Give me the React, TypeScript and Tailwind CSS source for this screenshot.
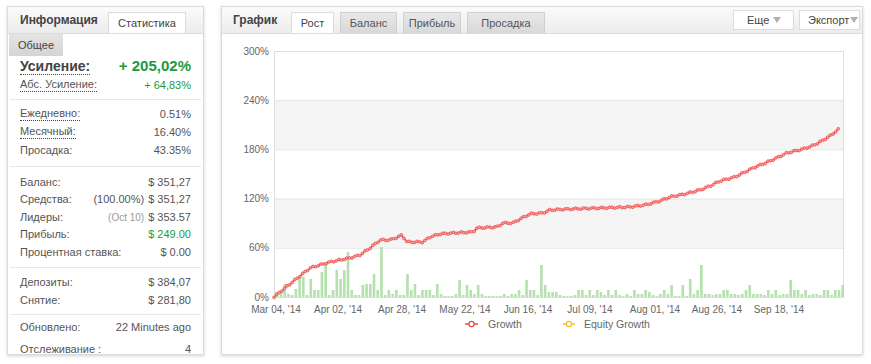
import React from 'react';

const font = { fontFamily: '"Liberation Sans", Arial, sans-serif' };

// bar heights in px, one per trading day
const bars = [
  5, 5, 13, 3, 2, 8, 22, 20, 2, 18, 7, 7, 25, 35, 2, 7, 27, 18, 27, 45,
  7, 2, 2, 12, 13, 13, 23, 7, 50, 2, 7, 3, 7, 2, 2, 23, 7, 13, 2, 7,
  7, 7, 2, 13, 3, 1, 1, 1, 3, 17, 2, 12, 7, 3, 12, 3, 1, 1, 1, 1,
  1, 3, 1, 3, 3, 7, 2, 17, 7, 7, 2, 32, 12, 5, 5, 5, 2, 1, 1, 1,
  2, 7, 7, 2, 7, 2, 7, 5, 2, 7, 2, 7, 2, 1, 3, 1, 7, 3, 3, 7,
  5, 2, 1, 3, 7, 3, 12, 1, 1, 12, 1, 18, 3, 7, 32, 3, 3, 2, 3, 3,
  7, 7, 3, 3, 2, 3, 7, 12, 3, 3, 3, 2, 7, 3, 7, 2, 3, 3, 17, 7,
  7, 3, 7, 2, 3, 3, 2, 7, 7, 2, 7, 7, 12,
];

// growth curve key points (page coords)
const key: [number, number][] = [
  [274, 297], [280, 292], [290, 284], [300, 276], [310, 268], [320, 265], [330, 262],
  [340, 260], [350, 258], [360, 255], [370, 248], [380, 240], [390, 240], [398, 237],
  [402, 235], [407, 242], [423, 242], [430, 237], [440, 234], [453, 233], [473, 232],
  [477, 228], [497, 227], [503, 223], [513, 223], [520, 219], [530, 214], [543, 213],
  [550, 210], [570, 209], [600, 208], [630, 207], [645, 205], [660, 201], [670, 197],
  [685, 194], [700, 190], [710, 186], [720, 181], [735, 177], [753, 168], [770, 161],
  [787, 153], [803, 149], [812, 146], [820, 142], [830, 136], [840, 128],
];

const OX = 222;
const OY = 34;

function growthPoints() {
  const pts: [number, number][] = [];
  let k = 0;
  for (let x = 274; x <= 840; x += 2.6) {
    while (k < key.length - 2 && key[k + 1][0] < x) k++;
    const [x0, y0] = key[k];
    const [x1, y1] = key[k + 1];
    const t = Math.min(1, Math.max(0, (x - x0) / (x1 - x0)));
    const y = y0 + (y1 - y0) * t + Math.sin(x * 1.7) * 0.7;
    pts.push([x - OX, y - OY]);
  }
  return pts;
}

const xLabels: [number, string][] = [
  [276, "Mar 04, '14"],
  [338, "Apr 02, '14"],
  [402, "Apr 28, '14"],
  [465, "May 22, '14"],
  [528, "Jun 16, '14"],
  [590, "Jul 09, '14"],
  [655, "Aug 01, '14"],
  [717, "Aug 26, '14"],
  [779, "Sep 18, '14"],
];

function Chart() {
  const left = 52;
  const right = 621;
  const top = 17;
  const bottom = 263;
  const step = (bottom - top) / 5;
  const pts = growthPoints();
  const ticks = ['300%', '240%', '180%', '120%', '60%', '0%'];

  return (
    <svg width={640} height={320} className="block" style={font}>
      <rect x={left} y={top + step} width={right - left} height={step} fill="#f5f5f5" />
      <rect x={left} y={top + step * 3} width={right - left} height={step} fill="#f5f5f5" />
      {ticks.map((t, i) => (
        <g key={t}>
          <line x1={left} x2={right} y1={top + step * i + 0.5} y2={top + step * i + 0.5} stroke="#e6e6e6" />
          <text x={47} y={top + step * i + 3.5} fontSize={10} fill="#666" textAnchor="end">
            {t}
          </text>
        </g>
      ))}
      <rect x={left + 0.5} y={top + 0.5} width={right - left} height={bottom - top} fill="none" stroke="#dedede" />
      {bars.map((h, i) => (
        <rect key={i} x={54 + i * 3.72} y={bottom - h} width={2.6} height={h} fill="#b4e1ad" />
      ))}
      <polyline
        points={pts.map((p) => p.join(',')).join(' ')}
        fill="none"
        stroke="#ee4040"
        strokeWidth={1.5}
      />
      {pts.map((p, i) => (
        <circle key={i} cx={p[0]} cy={p[1]} r={1.4} fill="#f7a3a3" stroke="#ef4f4f" strokeWidth={0.8} />
      ))}
      {xLabels.map(([x, l]) => (
        <text key={l} x={x - OX} y={278.5} fontSize={10} fill="#666" textAnchor="middle">
          {l}
        </text>
      ))}
      {/* legend */}
      <line x1={243} x2={256} y1={290} y2={290} stroke="#e84848" strokeWidth={1.5} />
      <circle cx={249.5} cy={290} r={2.6} fill="#fff" stroke="#e84848" strokeWidth={1.2} />
      <text x={266} y={293.5} fontSize={10.5} fill="#666">Growth</text>
      <line x1={341} x2={353} y1={290} y2={290} stroke="#f3c019" strokeWidth={1.5} />
      <circle cx={347} cy={290} r={2.6} fill="#fff" stroke="#f3c019" strokeWidth={1.2} />
      <text x={362} y={293.5} fontSize={10.5} fill="#666">Equity Growth</text>
    </svg>
  );
}

function Row({ label, value, dotted, green, extra }: {
  label: string;
  value: string;
  dotted?: boolean;
  green?: boolean;
  extra?: React.ReactNode;
}) {
  return (
    <div className="flex h-[17.5px] items-center justify-between px-3 text-[11px] text-[#555]">
      <span className={dotted ? 'border-b border-dotted border-[#444] leading-[13px]' : ''}>{label}</span>
      <span className={green ? 'text-[#1d9a3c]' : ''}>
        {extra}
        {value}
      </span>
    </div>
  );
}

function Divider({ className }: { className: string }) {
  return <div className={`mx-[2px] h-px bg-[#e6e6e6] ${className}`} />;
}

export default function App() {
  return (
    <div className="flex h-[364px] w-[871px] gap-[17px] bg-white pl-[7px] pt-[6px]" style={font}>
      {/* Info panel */}
      <div className="h-[349px] w-[197px] overflow-hidden border border-[#dcdcdc] bg-white shadow-[0_1px_3px_rgba(0,0,0,0.18)]">
        <div className="flex h-[27px] items-end border-b border-[#dcdcdc] bg-gradient-to-b from-[#fbfbfb] to-[#ececec]">
          <div className="w-[100px] self-center pl-3 text-[12px] font-bold text-[#444]">Информация</div>
          <div className="flex h-[21px] w-[78px] items-center justify-center border border-b-0 border-[#dcdcdc] bg-white text-[11px] text-[#444]">
            Статистика
          </div>
        </div>
        <div className="ml-px flex h-[22px] w-[54px] items-center justify-center bg-gradient-to-b from-[#e4e4e4] to-[#d4d4d4] text-[11px] text-[#444]">
          Общее
        </div>
        <div className="flex h-[20px] items-center justify-between px-3">
          <span className="border-b border-dotted border-[#444] text-[14px] font-bold leading-[16px] text-[#444]">Усиление:</span>
          <span className="text-[15px] font-bold text-[#1d9a3c]">+ 205,02%</span>
        </div>
        <div className="flex h-[18px] items-center justify-between px-3 text-[11px] text-[#555]">
          <span className="border-b border-dotted border-[#444] leading-[13px]">Абс. Усиление:</span>
          <span className="text-[#1d9a3c]">+ 64,83%</span>
        </div>
        <Divider className="mt-[5px]" />
        <div className="pt-[5px]">
          <div className="h-[18px]"><Row label="Ежедневно:" value="0.51%" dotted /></div>
          <div className="h-[18px]"><Row label="Месячный:" value="16.40%" dotted /></div>
          <div className="h-[18px]"><Row label="Просадка:" value="43.35%" /></div>
        </div>
        <Divider className="mt-[7px]" />
        <div className="pt-[6px]">
          <Row label="Баланс:" value="$ 351,27" />
          <Row label="Средства:" value="$ 351,27" extra={<span className="mr-1">(100.00%)</span>} />
          <Row label="Лидеры:" value="$ 353.57" extra={<span className="mr-1 text-[10px] text-[#999]">(Oct 10)</span>} />
          <Row label="Прибыль:" value="$ 249.00" green />
          <Row label="Процентная ставка:" value="$ 0.00" />
        </div>
        <Divider className="mt-[6px]" />
        <div className="pt-[6px]">
          <Row label="Депозиты:" value="$ 384,07" />
          <Row label="Снятие:" value="$ 281,80" />
        </div>
        <Divider className="mt-[5px]" />
        <div className="pt-[4px]">
          <Row label="Обновлено:" value="22 Minutes ago" />
          <div className="mt-[5px] flex h-[16px] items-center justify-between px-3 text-[11px] leading-[13px] text-[#555]">
            <span><span className="underline">Отслеживание</span> :</span>
            <span>4</span>
          </div>
        </div>
      </div>

      {/* Chart panel */}
      <div className="h-[349px] w-[642px] overflow-hidden border border-[#dcdcdc] bg-white shadow-[0_1px_3px_rgba(0,0,0,0.18)]">
        <div className="flex h-[27px] items-end border-b border-[#dcdcdc] bg-gradient-to-b from-[#fbfbfb] to-[#ececec]">
          <div className="w-[69px] self-center pl-[11px] text-[12px] font-bold text-[#444]">График</div>
          <div className="flex gap-[6px]">
            <div className="flex h-[21px] w-[43px] items-center justify-center border border-b-0 border-[#dcdcdc] bg-white text-[11px] text-[#444]">Рост</div>
            <div className="flex h-[21px] w-[57px] items-center justify-center border border-b-0 border-[#d0d0d0] bg-gradient-to-b from-[#e8e8e8] to-[#d8d8d8] text-[11px] text-[#555]">Баланс</div>
            <div className="flex h-[21px] w-[58px] items-center justify-center border border-b-0 border-[#d0d0d0] bg-gradient-to-b from-[#e8e8e8] to-[#d8d8d8] text-[11px] text-[#555]">Прибыль</div>
            <div className="flex h-[21px] w-[78px] items-center justify-center border border-b-0 border-[#d0d0d0] bg-gradient-to-b from-[#e8e8e8] to-[#d8d8d8] text-[11px] text-[#555]">Просадка</div>
          </div>
          <div className="mr-[2px] ml-auto flex gap-[5px] self-center">
            <button className="flex h-[20px] w-[61px] items-center border border-[#dcdcdc] bg-white pl-[13px] text-[11px] text-[#444]">
              Еще
              <svg width="8" height="6" className="ml-auto mr-[12px]"><path d="M0 0h8L4 6z" fill="#b0b0b0" /></svg>
            </button>
            <button className="flex h-[20px] w-[61px] items-center border border-[#dcdcdc] bg-white pl-[8px] text-[11px] text-[#444]">
              Экспорт
              <svg width="8" height="6" className="ml-auto mr-[1px]"><path d="M0 0h8L4 6z" fill="#b0b0b0" /></svg>
            </button>
          </div>
        </div>
        <Chart />
      </div>
    </div>
  );
}
